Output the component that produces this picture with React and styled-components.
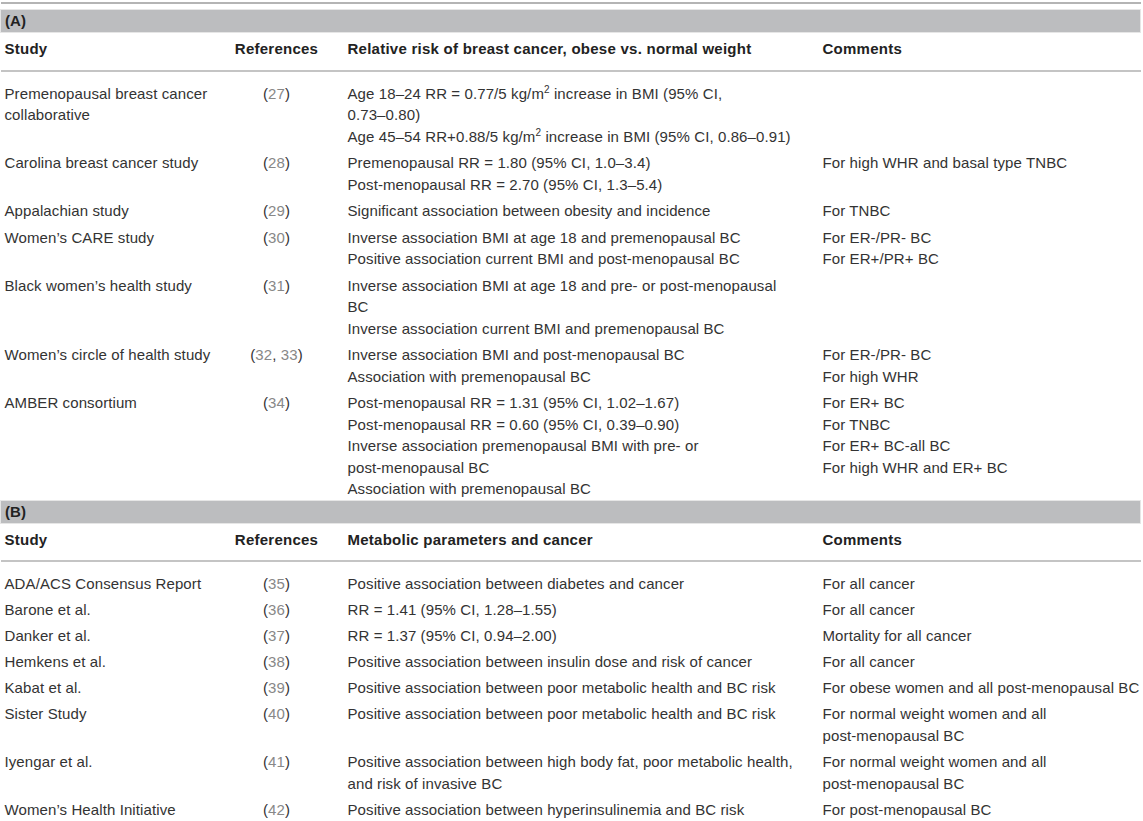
import React from 'react';
import styled, { createGlobalStyle } from 'styled-components';

const GlobalStyle = createGlobalStyle`
  body {
    margin : 0;
    background : #ffffff;
    font-family : "Liberation Sans", Arial, sans-serif;
    color : #333333;
  }
`;

const Page = styled.div`
  width   : 1141px;
  padding : 2px 0 0 0;
`;

const Table = styled.table`
  width : 100%;
  border-collapse : collapse;
  border-top : 2px solid #b4b4b4;
  font-size : 15px;
  letter-spacing : 0.1px;
  line-height : 21.5px;
  table-layout : fixed;
`;

const SectionCell = styled.td`
  background : #bcbdbf;
  border : 1px solid #e6e6e6;
  font-weight : bold;
  color : #222;
  padding : 0 4px;
  height : 22px;
  line-height : 22px;
`;

const HeadCell = styled.th`
  text-align : ${p => (p.$center ? 'center' : 'left')};
  font-weight : bold;
  letter-spacing : 0.25px;
  color : #222;
  padding : 5px ${p => (p.$center ? '24px' : '4px')} 10px 4px;
  border-bottom : 2px solid #c4c4c4;
  vertical-align : top;
  white-space : nowrap;
`;

const Cell = styled.td`
  vertical-align : top;
  padding-left : 4px;
  padding-right : ${p => (p.$center ? '24px' : '4px')};
  text-align : ${p => (p.$center ? 'center' : 'left')};
  white-space : nowrap;
`;

const BodyRow = styled.tr`
  td {
    padding-top    : ${p => (p.$first ? '11px' : `${p.$pad}px`)};
    padding-bottom : ${p => (p.$last ? '0px' : `${p.$pad}px`)};
  }
`;

const Ref = styled.span`
  color : #888;
`;

const Line = styled.div``;

const Sup = styled.sup`
  font-size : 10px;
  line-height : 0;
  vertical-align : 6px;
`;

const Spacer = styled.td`
  height : 5px;
  padding : 0;
`;

const refs = nums => (
  <>
    (
    {nums.map((n, i) => (
      <React.Fragment key={n}>
        {i > 0 && ', '}
        <Ref>{n}</Ref>
      </React.Fragment>
    ))}
    )
  </>
);

const sectionA = [
  {
    study : ['Premenopausal breast cancer', 'collaborative'],
    refs : [27],
    risk : [
      <>Age 18–24 RR = 0.77/5 kg/m<Sup>2</Sup> increase in BMI (95% CI,</>,
      '0.73–0.80)',
      <>Age 45–54 RR+0.88/5 kg/m<Sup>2</Sup> increase in BMI (95% CI, 0.86–0.91)</>,
    ],
    comments : [],
  },
  {
    study : ['Carolina breast cancer study'],
    refs : [28],
    risk : ['Premenopausal RR = 1.80 (95% CI, 1.0–3.4)', 'Post-menopausal RR = 2.70 (95% CI, 1.3–5.4)'],
    comments : ['For high WHR and basal type TNBC'],
  },
  {
    study : ['Appalachian study'],
    refs : [29],
    risk : ['Significant association between obesity and incidence'],
    comments : ['For TNBC'],
  },
  {
    study : ['Women’s CARE study'],
    refs : [30],
    risk : ['Inverse association BMI at age 18 and premenopausal BC', 'Positive association current BMI and post-menopausal BC'],
    comments : ['For ER-/PR- BC', 'For ER+/PR+ BC'],
  },
  {
    study : ['Black women’s health study'],
    refs : [31],
    risk : ['Inverse association BMI at age 18 and pre- or post-menopausal', 'BC', 'Inverse association current BMI and premenopausal BC'],
    comments : [],
  },
  {
    study : ['Women’s circle of health study'],
    refs : [32, 33],
    risk : ['Inverse association BMI and post-menopausal BC', 'Association with premenopausal BC'],
    comments : ['For ER-/PR- BC', 'For high WHR'],
  },
  {
    study : ['AMBER consortium'],
    refs : [34],
    risk : [
      'Post-menopausal RR = 1.31 (95% CI, 1.02–1.67)',
      'Post-menopausal RR = 0.60 (95% CI, 0.39–0.90)',
      'Inverse association premenopausal BMI with pre- or',
      'post-menopausal BC',
      'Association with premenopausal BC',
    ],
    comments : ['For ER+ BC', 'For TNBC', 'For ER+ BC-all BC', 'For high WHR and ER+ BC'],
  },
];

const sectionB = [
  { study : ['ADA/ACS Consensus Report'], refs : [35], risk : ['Positive association between diabetes and cancer'], comments : ['For all cancer'] },
  { study : ['Barone et al.'], refs : [36], risk : ['RR = 1.41 (95% CI, 1.28–1.55)'], comments : ['For all cancer'] },
  { study : ['Danker et al.'], refs : [37], risk : ['RR = 1.37 (95% CI, 0.94–2.00)'], comments : ['Mortality for all cancer'] },
  { study : ['Hemkens et al.'], refs : [38], risk : ['Positive association between insulin dose and risk of cancer'], comments : ['For all cancer'] },
  { study : ['Kabat et al.'], refs : [39], risk : ['Positive association between poor metabolic health and BC risk'], comments : ['For obese women and all post-menopausal BC'] },
  { study : ['Sister Study'], refs : [40], risk : ['Positive association between poor metabolic health and BC risk'], comments : ['For normal weight women and all', 'post-menopausal BC'] },
  { study : ['Iyengar et al.'], refs : [41], risk : ['Positive association between high body fat, poor metabolic health,', 'and risk of invasive BC'], comments : ['For normal weight women and all', 'post-menopausal BC'] },
  { study : ['Women’s Health Initiative'], refs : [42], risk : ['Positive association between hyperinsulinemia and BC risk'], comments : ['For post-menopausal BC'] },
];

const lines = list => list.map((l, i) => <Line key={i}>{l}</Line>);

const Rows = ({ data, pad, lastSection }) =>
  data.map((row, i) => (
    <BodyRow key={i} $pad={pad} $first={i === 0} $last={!lastSection && i === data.length - 1}>
      <Cell>{lines(row.study)}</Cell>
      <Cell $center>{refs(row.refs)}</Cell>
      <Cell>{lines(row.risk)}</Cell>
      <Cell>{lines(row.comments)}</Cell>
    </BodyRow>
  ));

const Section = ({ label, title, data, pad, lastSection }) => (
  <>
    <tr>
      <SectionCell colSpan={4}>{label}</SectionCell>
    </tr>
    <tr>
      <HeadCell>Study</HeadCell>
      <HeadCell $center>References</HeadCell>
      <HeadCell>{title}</HeadCell>
      <HeadCell>Comments</HeadCell>
    </tr>
    <Rows data={data} pad={pad} lastSection={lastSection} />
  </>
);

export default function App() {
  return (
    <Page>
      <GlobalStyle />
      <Table>
        <colgroup>
          <col style={{ width: 229 }} />
          <col style={{ width: 114 }} />
          <col style={{ width: 475 }} />
          <col />
        </colgroup>
        <tbody>
          <tr><Spacer colSpan={4} /></tr>
          <Section label="(A)" title="Relative risk of breast cancer, obese vs. normal weight" data={sectionA} pad={2.5} />
          <Section label="(B)" title="Metabolic parameters and cancer" data={sectionB} pad={2.3} lastSection />
        </tbody>
      </Table>
    </Page>
  );
}
